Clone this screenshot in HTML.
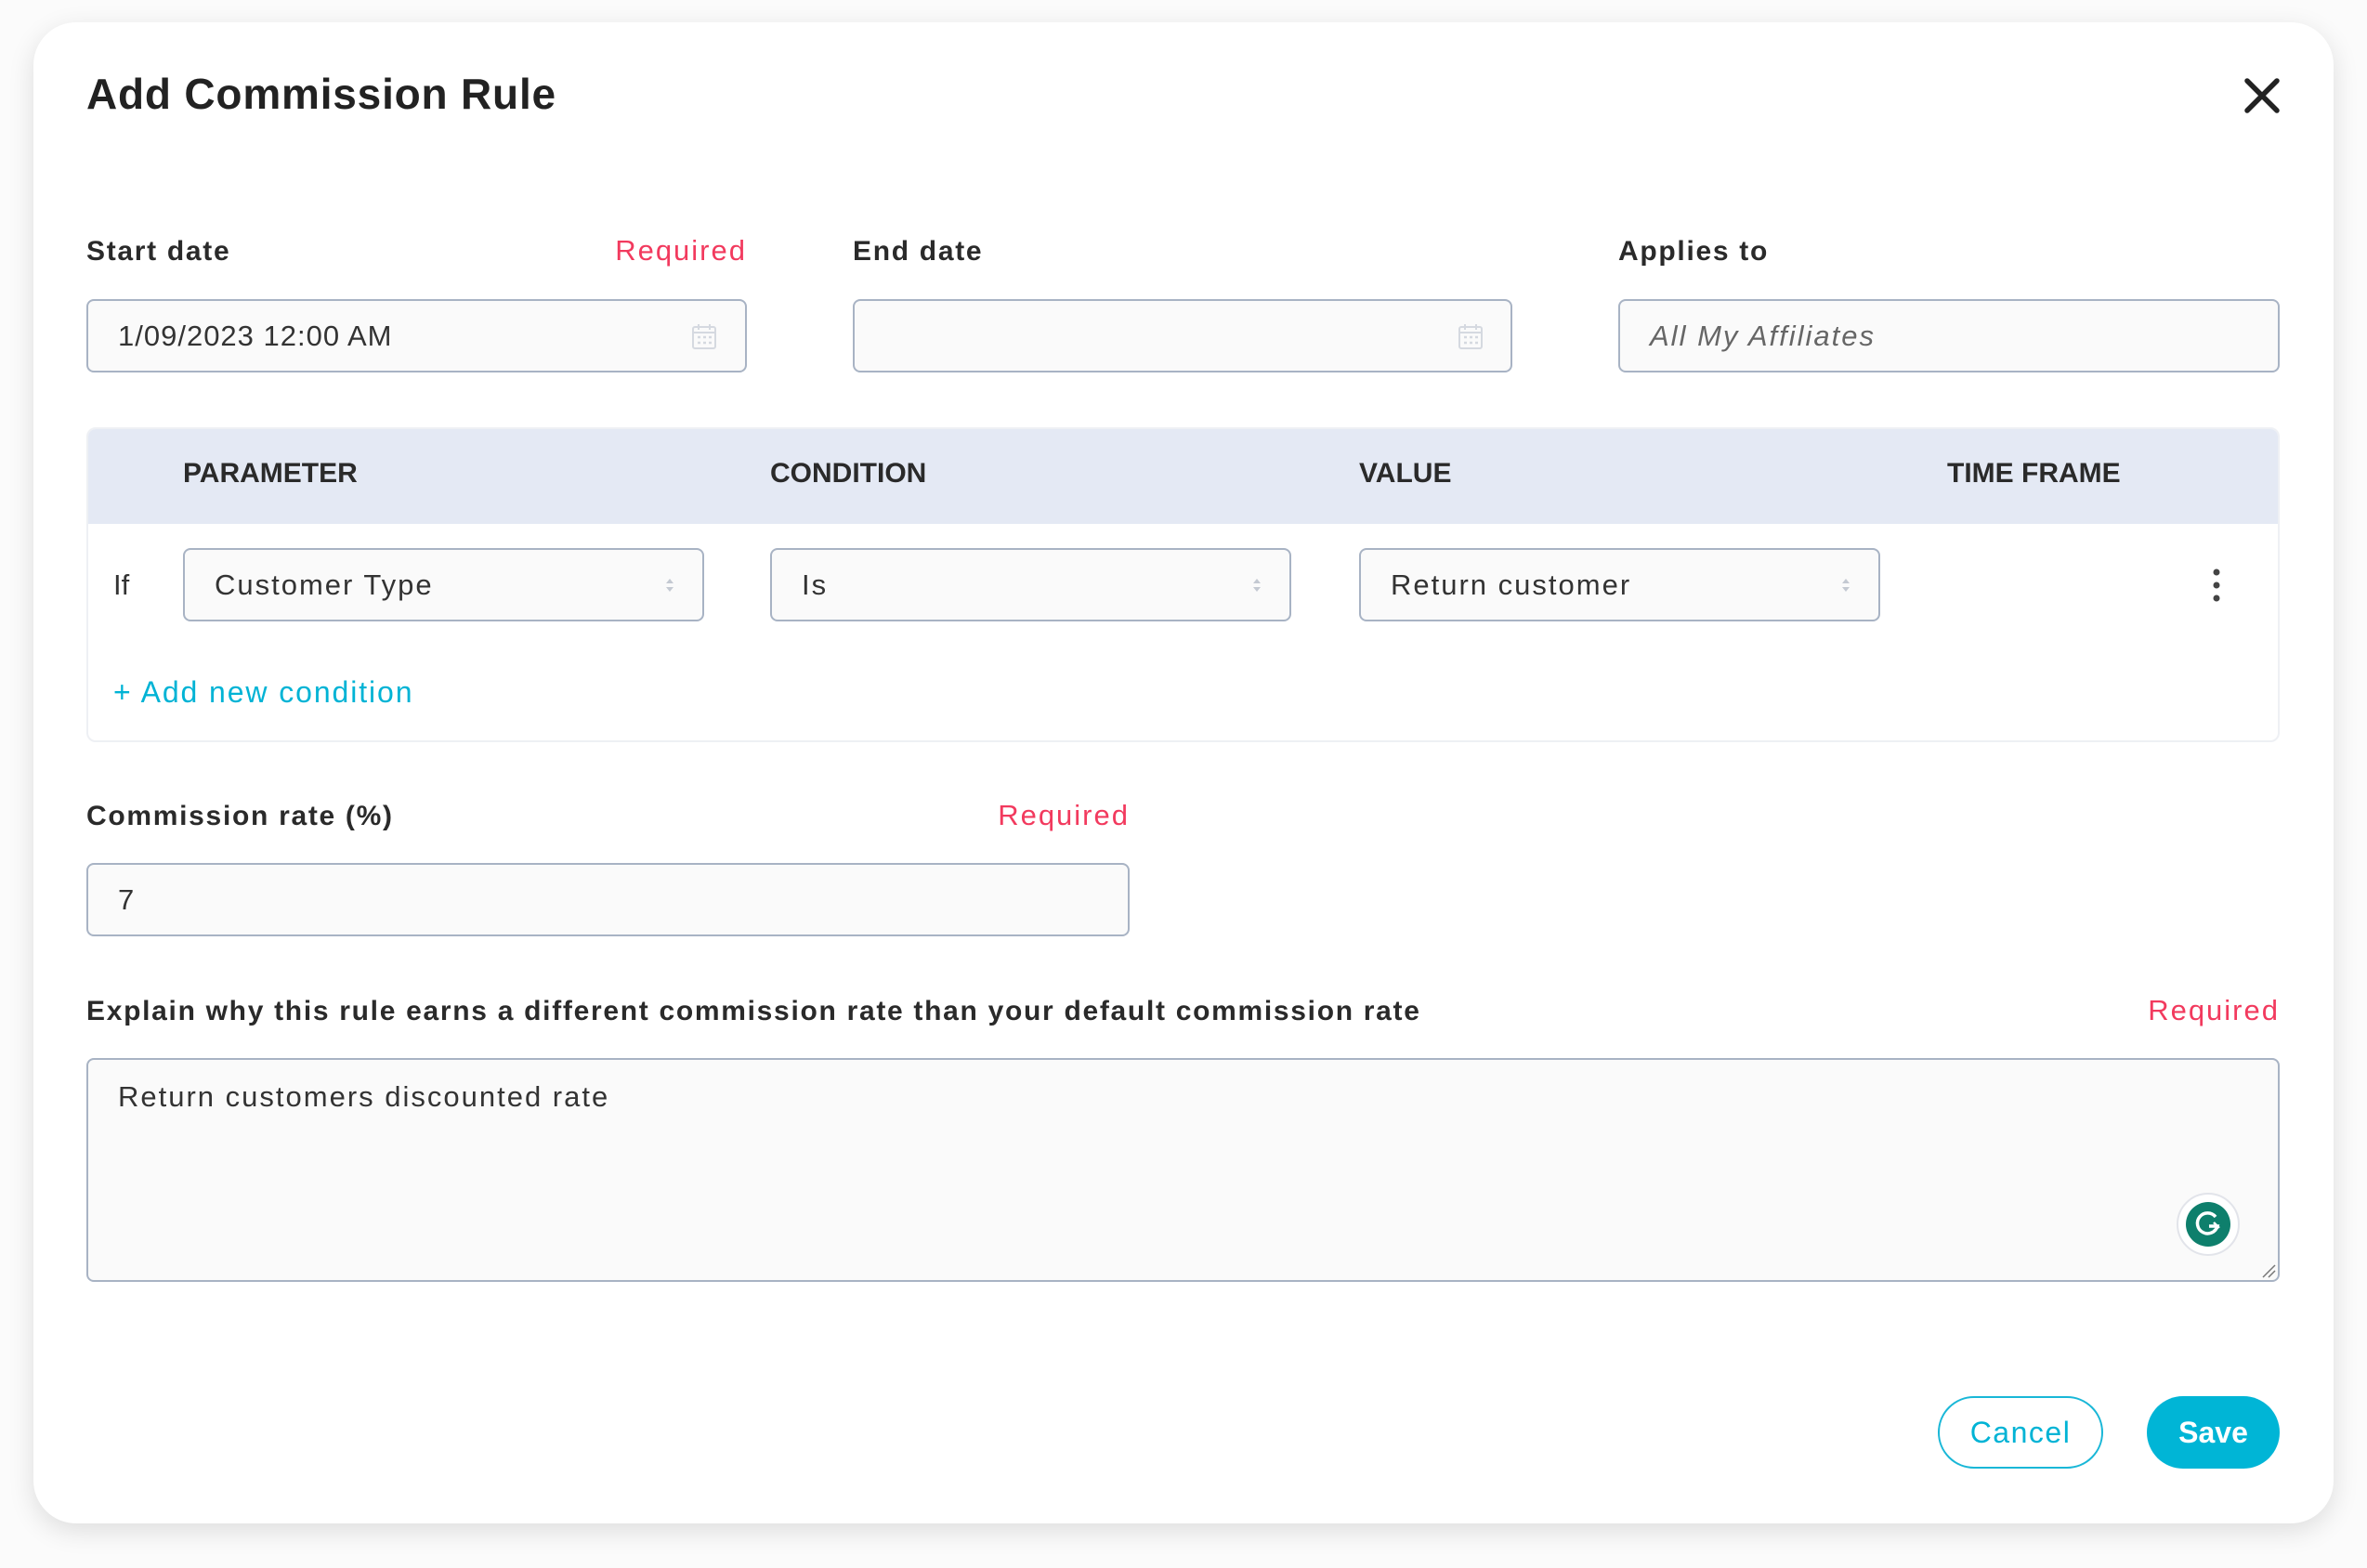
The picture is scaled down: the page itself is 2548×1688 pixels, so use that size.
<!DOCTYPE html>
<html><head><meta charset="utf-8"><style>
*{box-sizing:border-box;margin:0;padding:0}
body{width:2548px;height:1688px;background:#fbfbfb;font-family:"Liberation Sans",sans-serif;color:#222;position:relative;overflow:hidden}
.card{position:absolute;left:36px;top:24px;width:2476px;height:1616px;background:#fff;border-radius:46px;box-shadow:0 8px 28px rgba(0,0,0,.12)}
.a{position:absolute}
.title{left:93px;top:74px;font-size:46px;font-weight:700;color:#222;letter-spacing:0.8px}
.lbl{font-size:30px;font-weight:700;color:#2a2a2a;letter-spacing:1.7px}
.req{font-size:31px;color:#f23a5e;letter-spacing:2px}
.inp{border:2px solid #a8b3c4;border-radius:8px;background:#fafafa;font-size:31px;color:#333;display:flex;align-items:center;padding-left:32px;letter-spacing:2px}
.th{font-size:30px;font-weight:700;color:#2a2a2a;top:493px}
.sel{top:590px;height:79px;width:561px}
.arr{position:absolute;right:30px;top:28px;width:10px;height:20px}
</style></head><body>
<div class="card"></div>
<div class="a title">Add Commission Rule</div>
<svg class="a" style="left:2416px;top:84px" width="38" height="38" viewBox="0 0 38 38"><path d="M3 3L35 35M35 3L3 35" stroke="#222" stroke-width="5.5" stroke-linecap="round"/></svg>

<div class="a lbl" style="left:93px;top:254px">Start date</div>
<div class="a req" style="right:1744px;top:252px">Required</div>
<div class="a lbl" style="left:918px;top:254px">End date</div>
<div class="a lbl" style="left:1742px;top:254px">Applies to</div>

<div class="a inp" style="left:93px;top:322px;width:711px;height:79px;letter-spacing:1px">1/09/2023 12:00 AM</div>
<svg class="a" style="left:745px;top:348px" width="26" height="28" viewBox="0 0 26 28"><rect x="1" y="4" width="24" height="23" rx="2" fill="none" stroke="#d5d9e0" stroke-width="2"/><path d="M1 10h24M7 1v6M19 1v6" stroke="#d5d9e0" stroke-width="2"/><path d="M6 15h3M12 15h3M18 15h3M6 21h3M12 21h3M18 21h3" stroke="#d5d9e0" stroke-width="2.5"/></svg>
<div class="a inp" style="left:918px;top:322px;width:710px;height:79px"></div>
<svg class="a" style="left:1570px;top:348px" width="26" height="28" viewBox="0 0 26 28"><rect x="1" y="4" width="24" height="23" rx="2" fill="none" stroke="#d5d9e0" stroke-width="2"/><path d="M1 10h24M7 1v6M19 1v6" stroke="#d5d9e0" stroke-width="2"/><path d="M6 15h3M12 15h3M18 15h3M6 21h3M12 21h3M18 21h3" stroke="#d5d9e0" stroke-width="2.5"/></svg>
<div class="a inp" style="left:1742px;top:322px;width:712px;height:79px;font-style:italic;color:#666">All My Affiliates</div>

<div class="a" style="left:93px;top:460px;width:2361px;height:339px;border:2px solid #eef0f4;border-radius:10px;overflow:hidden">
<div style="height:102px;background:#e4e9f4"></div></div>
<div class="a th" style="left:197px">PARAMETER</div>
<div class="a th" style="left:829px">CONDITION</div>
<div class="a th" style="left:1463px">VALUE</div>
<div class="a th" style="left:2096px">TIME FRAME</div>

<div class="a" style="left:122px;top:612px;font-size:31px;color:#333">If</div>
<div class="a inp sel" style="left:197px">Customer Type<svg class="arr" viewBox="0 0 10 20"><path d="M1 8L5 3L9 8ZM1 12L5 17L9 12Z" fill="#c4c9d2"/></svg></div>
<div class="a inp sel" style="left:829px">Is<svg class="arr" viewBox="0 0 10 20"><path d="M1 8L5 3L9 8ZM1 12L5 17L9 12Z" fill="#c4c9d2"/></svg></div>
<div class="a inp sel" style="left:1463px">Return customer<svg class="arr" viewBox="0 0 10 20"><path d="M1 8L5 3L9 8ZM1 12L5 17L9 12Z" fill="#c4c9d2"/></svg></div>
<svg class="a" style="left:2379px;top:610px" width="14" height="40" viewBox="0 0 14 40"><circle cx="7" cy="6" r="3.5" fill="#444"/><circle cx="7" cy="20" r="3.5" fill="#444"/><circle cx="7" cy="34" r="3.5" fill="#444"/></svg>
<div class="a" style="left:122px;top:727px;font-size:32px;color:#00b3d5;letter-spacing:1.9px">+ Add new condition</div>

<div class="a lbl" style="left:93px;top:862px">Commission rate (%)</div>
<div class="a req" style="right:1332px;top:860px">Required</div>
<div class="a inp" style="left:93px;top:929px;width:1123px;height:79px">7</div>

<div class="a lbl" style="left:93px;top:1072px">Explain why this rule earns a different commission rate than your default commission rate</div>
<div class="a req" style="right:94px;top:1070px">Required</div>
<div class="a inp" style="left:93px;top:1139px;width:2361px;height:241px;align-items:flex-start;padding-top:22px">Return customers discounted rate</div>
<div class="a" style="left:2343px;top:1284px;width:68px;height:68px;border-radius:50%;border:2px solid #e2e4ea;background:#fff"></div>
<svg class="a" style="left:2352px;top:1293px" width="50" height="50" viewBox="0 0 50 50"><circle cx="25" cy="25" r="24" fill="#0e7f6c"/><path d="M33 17A11 11 0 1 0 35 27H26" fill="none" stroke="#fff" stroke-width="3.5"/><path d="M31 23l5 5-5 4" fill="none" stroke="#fff" stroke-width="2.5"/></svg>
<svg class="a" style="left:2434px;top:1360px" width="16" height="16" viewBox="0 0 16 16"><path d="M2 15L15 2M8 15L15 8" stroke="#777" stroke-width="1.5"/></svg>

<div class="a" style="left:2086px;top:1503px;width:178px;height:78px;border:2px solid #19b7d7;border-radius:39px;color:#00b3d5;font-size:32px;letter-spacing:1.5px;display:flex;align-items:center;justify-content:center">Cancel</div>
<div class="a" style="left:2311px;top:1503px;width:143px;height:78px;background:#00b5d6;border-radius:39px;color:#fff;font-size:32px;font-weight:700;display:flex;align-items:center;justify-content:center">Save</div>
</body></html>
